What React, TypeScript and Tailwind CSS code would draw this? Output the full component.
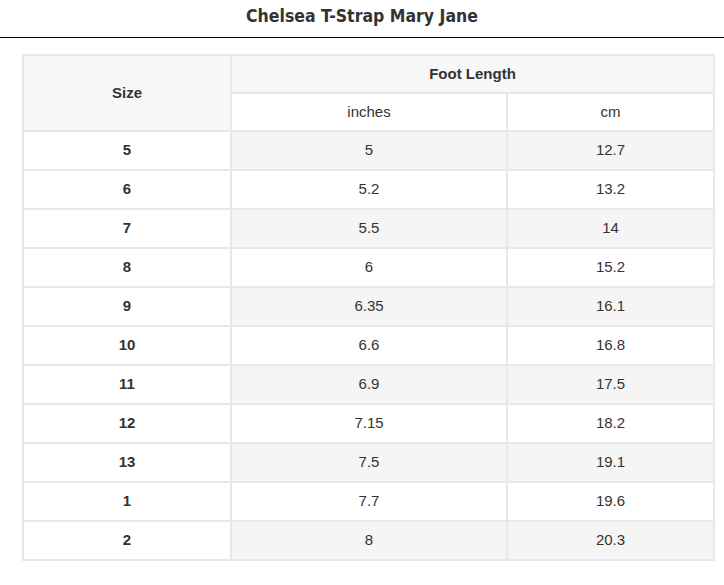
const ROWS: [string, string, string][] = [
  ["5", "5", "12.7"],
  ["6", "5.2", "13.2"],
  ["7", "5.5", "14"],
  ["8", "6", "15.2"],
  ["9", "6.35", "16.1"],
  ["10", "6.6", "16.8"],
  ["11", "6.9", "17.5"],
  ["12", "7.15", "18.2"],
  ["13", "7.5", "19.1"],
  ["1", "7.7", "19.6"],
  ["2", "8", "20.3"],
];

const cell = "border-2 border-[#e8e8e8] text-center align-middle p-0";

export default function App() {
  return (
    <div className="w-[724px] h-[585px] bg-white text-[#333] font-['Liberation_Sans',Arial,sans-serif]">
      <div className="h-[38px] flex items-center justify-center border-b border-black">
        <h1 className="text-[17.5px] font-bold font-['DejaVu_Sans_Condensed','DejaVu_Sans',sans-serif] text-[#333] -mt-1">
          Chelsea T-Strap Mary Jane
        </h1>
      </div>

      <div className="pl-[22px] pt-[16px]">
        <table className="border-collapse w-[691px] table-fixed text-[15px]">
          <colgroup>
            <col className="w-[208px]" />
            <col className="w-[276px]" />
            <col className="w-[207px]" />
          </colgroup>
          <thead>
            <tr className="h-[38px]">
              <th rowSpan={2} className={`${cell} bg-[#f7f7f7] font-bold`}>
                Size
              </th>
              <th colSpan={2} className={`${cell} bg-[#f7f7f7] font-bold`}>
                Foot Length
              </th>
            </tr>
            <tr className="h-[38px]">
              <td className={`${cell} bg-white`}>inches</td>
              <td className={`${cell} bg-white`}>cm</td>
            </tr>
          </thead>
          <tbody>
            {ROWS.map(([size, inch, cm], i) => {
              const bg = i % 2 === 0 ? "bg-[#f5f5f5]" : "bg-white";
              return (
                <tr key={i} className="h-[39px]">
                  <td className={`${cell} bg-white font-bold`}>{size}</td>
                  <td className={`${cell} ${bg}`}>{inch}</td>
                  <td className={`${cell} ${bg}`}>{cm}</td>
                </tr>
              );
            })}
          </tbody>
        </table>
      </div>
    </div>
  );
}
